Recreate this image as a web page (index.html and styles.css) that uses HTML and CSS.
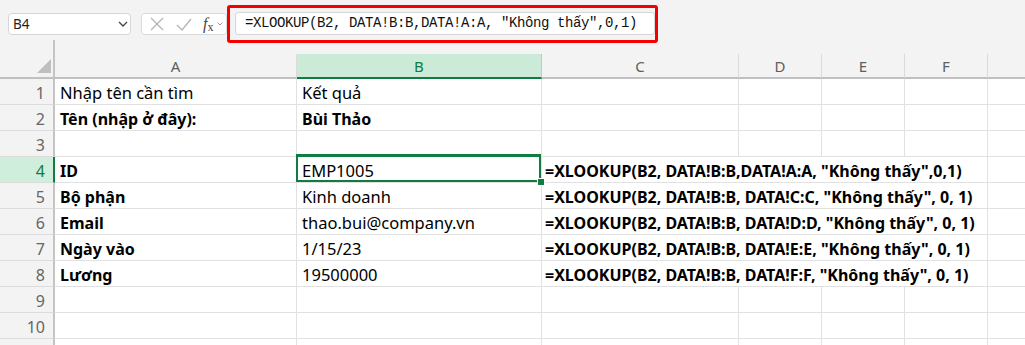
FILE: index.html
```html
<!DOCTYPE html>
<html lang="vi">
  <head>
    <meta charset="UTF-8" />
    <meta name="viewport" content="width=device-width, initial-scale=1.0" />
    <title>XLOOKUP - Bảng tra cứu</title>
    <link rel="stylesheet" href="styles.css">
  </head>
  <body>
    <div class="formula-bar">
      <div class="name-box">
        <span>B4</span>
        <svg class="chevron" width="10" height="6" viewBox="0 0 10 6">
          <path d="M1 1l4 4 4-4" fill="none" stroke="#444" stroke-width="1.3" />
        </svg>
      </div>

      <div class="fx-box">
        <svg class="icon-cancel" width="14" height="14" viewBox="0 0 14 14">
          <path d="M1 1l12 12M13 1L1 13" fill="none" stroke="#b4b4b4" stroke-width="1.3" />
        </svg>
        <svg class="icon-enter" width="16" height="13" viewBox="0 0 16 13">
          <path d="M1 7l5 5L15 1" fill="none" stroke="#b4b4b4" stroke-width="1.3" />
        </svg>
        <span class="fx"><i>f</i><sub>x</sub></span>
        <svg class="chevron-small" width="6" height="4" viewBox="0 0 6 4">
          <path d="M0.5 0.5l2.5 2.5 2.5-2.5" fill="none" stroke="#999" stroke-width="1" />
        </svg>
      </div>

      <!-- red highlight around the formula -->
      <div class="formula-mark">
        <div class="formula-input">=XLOOKUP(B2, DATA!B:B,DATA!A:A, "Không thấy",0,1)</div>
      </div>
    </div>

    <div class="sheet">
      <div class="corner"><span class="corner-arrow"></span></div>
      <div class="col-head">A</div>
      <div class="col-head selected">B</div>
      <div class="col-head">C</div>
      <div class="col-head">D</div>
      <div class="col-head">E</div>
      <div class="col-head">F</div>
      <div class="col-head last"></div>

      <div class="row-head">1</div>
      <div class="cell">Nhập tên cần tìm</div>
      <div class="cell">Kết quả</div>
      <div class="cell"></div><div class="cell"></div><div class="cell"></div><div class="cell"></div>
      <div class="cell last"></div>

      <div class="row-head">2</div>
      <div class="cell bold">Tên (nhập ở đây):</div>
      <div class="cell bold">Bùi Thảo</div>
      <div class="cell"></div><div class="cell"></div><div class="cell"></div><div class="cell"></div>
      <div class="cell last"></div>

      <div class="row-head">3</div>
      <div class="cell"></div><div class="cell"></div>
      <div class="cell"></div><div class="cell"></div><div class="cell"></div><div class="cell"></div>
      <div class="cell last"></div>

      <div class="row-head selected">4</div>
      <div class="cell bold">ID</div>
      <div class="cell active">EMP1005<span class="fill-handle"></span></div>
      <div class="cell bold formula">=XLOOKUP(B2, DATA!B:B,DATA!A:A, "Không thấy",0,1)</div>
      <div class="cell last"></div>

      <div class="row-head">5</div>
      <div class="cell bold">Bộ phận</div>
      <div class="cell">Kinh doanh</div>
      <div class="cell bold formula">=XLOOKUP(B2, DATA!B:B, DATA!C:C, "Không thấy", 0, 1)</div>
      <div class="cell last"></div>

      <div class="row-head">6</div>
      <div class="cell bold">Email</div>
      <div class="cell">thao.bui@company.vn</div>
      <div class="cell bold formula">=XLOOKUP(B2, DATA!B:B, DATA!D:D, "Không thấy", 0, 1)</div>
      <div class="cell last"></div>

      <div class="row-head">7</div>
      <div class="cell bold">Ngày vào</div>
      <div class="cell">1/15/23</div>
      <div class="cell bold formula">=XLOOKUP(B2, DATA!B:B, DATA!E:E, "Không thấy", 0, 1)</div>
      <div class="cell last"></div>

      <div class="row-head">8</div>
      <div class="cell bold">Lương</div>
      <div class="cell">19500000</div>
      <div class="cell bold formula">=XLOOKUP(B2, DATA!B:B, DATA!F:F, "Không thấy", 0, 1)</div>
      <div class="cell last"></div>

      <div class="row-head">9</div>
      <div class="cell"></div><div class="cell"></div>
      <div class="cell"></div><div class="cell"></div><div class="cell"></div><div class="cell"></div>
      <div class="cell last"></div>

      <div class="row-head">10</div>
      <div class="cell"></div><div class="cell"></div>
      <div class="cell"></div><div class="cell"></div><div class="cell"></div><div class="cell"></div>
      <div class="cell last"></div>

      <!-- row 11 only peeks in at the bottom edge -->
      <div class="row-head"></div>
      <div class="cell"></div><div class="cell"></div>
      <div class="cell"></div><div class="cell"></div><div class="cell"></div><div class="cell"></div>
      <div class="cell last"></div>
    </div>
  </body>
</html>
```

FILE: styles.css
```css
* {
  box-sizing: border-box;
}

body {
  margin: 0;
  overflow: hidden;
  background-color: #fff;
  font-family: "Noto Sans", "Open Sans", sans-serif;
  color: #000;
}

/* formula bar */

.formula-bar {
  display: flex;
  align-items: center;
  height: 48px;
  padding-left: 8px;
  background-color: #f3f3f3;
}

.name-box {
  display: flex;
  align-items: center;
  justify-content: space-between;
  width: 123px;
  height: 22px;
  padding: 0 2px 0 4px;
  background-color: #fff;
  border: 1px solid #d6d6d6;
  border-radius: 4px;
  font-size: 13.5px;
  color: #222;
}

.fx-box {
  display: flex;
  align-items: center;
  width: 86px;
  height: 22px;
  margin-left: 10px;
  padding-left: 8px;
  background-color: #fff;
  border: 1px solid #dadada;
  border-radius: 4px;
}

.icon-enter {
  margin-left: 12px;
}

.fx {
  margin-left: 11px;
  font-family: "Liberation Serif", serif;
  font-size: 16px;
  color: #444;
  line-height: 1;
}

.fx sub {
  font-size: 12px;
  font-style: normal;
  vertical-align: -2px;
}

.chevron-small {
  margin-left: 4px;
}

.formula-mark {
  width: 431px;
  height: 38px;
  padding: 4px 0 5px 5px;
  border: 3px solid #f50000;
  border-radius: 3px;
}

.formula-input {
  height: 100%;
  padding-left: 9px;
  background-color: #fff;
  border: 1px solid #d6d6d6;
  border-radius: 3px;
  font-family: "Liberation Mono", monospace;
  font-size: 14px;
  letter-spacing: -0.4px;
  line-height: 21px;
  color: #111;
  white-space: nowrap;
}

/* sheet grid */

.sheet {
  display: grid;
  grid-template-columns: 55px 242px 245px 197px 83px 83px 83px 1fr;
  grid-template-rows: 31px;
  grid-auto-rows: 26px;
  background-color: #f3f3f3;
}

.corner {
  display: flex;
  align-items: flex-end;
  justify-content: flex-end;
  align-self: end;
  height: 39px;
  padding: 0 2px 4px 0;
  border-right: 2px solid #c4c4c4;
  border-bottom: 2px solid #c0c0c0;
}

.corner-arrow {
  width: 0;
  height: 0;
  border-left: 14px solid transparent;
  border-bottom: 14px solid #bfbfbf;
}

.col-head {
  align-self: end;
  height: 25px;
  padding-top: 2px;
  border-right: 1px solid #dadada;
  border-bottom: 2px solid #c0c0c0;
  font-size: 15px;
  line-height: 21px;
  text-align: center;
  color: #5e5e5e;
}

.col-head.selected {
  background-color: #cbead8;
  border-bottom-color: #107c41;
  border-right-color: #a8d8bb;
  color: #107c41;
}

.col-head.last {
  border-right: none;
}

.row-head {
  display: flex;
  align-items: flex-end;
  justify-content: flex-end;
  padding-right: 8px;
  border-right: 2px solid #c4c4c4;
  border-bottom: 1px solid #dcdcdc;
  font-size: 16px;
  line-height: 22px;
  color: #666;
}

.row-head.selected {
  background-color: #d0eedc;
  border-right-color: #107c41;
  color: #107c41;
}

.cell {
  position: relative;
  display: flex;
  align-items: flex-end;
  padding: 0 4px 0 5px;
  background-color: #fff;
  border-right: 1px solid #e1e1e1;
  border-bottom: 1px solid #e1e1e1;
  font-size: 16.5px;
  line-height: 22px;
  white-space: nowrap;
}

.cell.bold {
  font-weight: 700;
  font-size: 16px;
}

.cell.formula {
  grid-column: span 4;
  padding-left: 3px;
}

.cell.last {
  border-right: none;
}

.cell.active::after {
  content: "";
  position: absolute;
  top: -3px;
  left: -1px;
  right: 0;
  bottom: 0;
  border: 2px solid #107c41;
  border-top-width: 3px;
}

.fill-handle {
  position: absolute;
  right: -4px;
  bottom: -4px;
  z-index: 1;
  width: 8px;
  height: 8px;
  background-color: #107c41;
  border: 1px solid #fff;
}
```
